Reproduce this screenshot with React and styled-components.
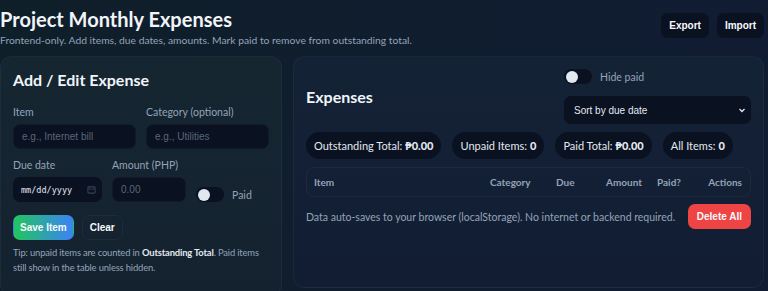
import React from "react";
import styled, { createGlobalStyle } from "styled-components";

const Global = createGlobalStyle`
  * { box-sizing: border-box; }
  html, body { margin: 0; padding: 0; }
  body {
    background: linear-gradient(100deg, #0f1f29 0%, #101d2f 55%, #111c33 100%);
    font-family: Lato, "Noto Sans", sans-serif;
    color: #e5e7eb;
    min-height: 291px;
    overflow: hidden;
  }
`;

const Page = styled.div`
  width: 768px;
  height: 291px;
  padding: 0 4px 0 0;
  display: flex;
  flex-direction: column;
`;

const Header = styled.header`
  display: flex;
  justify-content: space-between;
  align-items: flex-start;
  padding-top: 6px;
`;

const Title = styled.h1`
  margin: 0;
  font-size: 20px;
  line-height: 27px;
  font-weight: 700;
  color: #f1f5f9;
`;

const Subtitle = styled.p`
  margin: 0;
  font-size: 10.3px;
  line-height: 14px;
  color: #94a3b8;
`;

const HeaderButtons = styled.div`
  display: flex;
  gap: 8px;
  padding-top: 7px;
`;

const Btn = styled.button`
  font-family: "Liberation Sans", Arial, sans-serif;
  font-size: 10px;
  font-weight: 700;
  height: 25px;
  padding: 0 ${(p) => p.$px || 6}px;
  border-radius: 7px;
  border: 1px solid ${(p) => (p.$variant === "ghost" ? "#1d2b3a" : "transparent")};
  color: #f8fafc;
  cursor: pointer;
  background: ${(p) =>
    p.$variant === "primary"
      ? "linear-gradient(90deg, #22c55e, #3b82f6)"
      : p.$variant === "danger"
      ? "#ef4444"
      : p.$variant === "ghost"
      ? "transparent"
      : "#0a1120"};
`;

const Main = styled.main`
  display: grid;
  grid-template-columns: 282px minmax(0, 1fr);
  gap: 11px;
  margin-top: 9px;
  flex: 1;
`;

const Card = styled.section`
  border-radius: 12px;
  border: 1px solid rgba(148, 163, 184, 0.07);
  background: ${(p) => p.$bg};
  padding: ${(p) => p.$pad};
  height: ${(p) => p.$h};
`;

const CardTitle = styled.h2`
  margin: 0;
  font-size: 16px;
  line-height: 22px;
  font-weight: 700;
  color: #f1f5f9;
`;

const FormGrid = styled.div`
  display: grid;
  grid-template-columns: 123px 123px;
  gap: 10px;
  margin-top: 14px;
`;

const Field = styled.label`
  display: flex;
  flex-direction: column;
  gap: 5px;
`;

const Label = styled.span`
  font-size: 10.5px;
  line-height: 14px;
  color: #94a3b8;
`;

const Input = styled.input`
  width: ${(p) => p.$w || "100%"};
  height: 25px;
  border-radius: 7px;
  border: 1px solid #121a2a;
  background: #0a1120;
  color: #cbd5e1;
  padding: 0 8px;
  font-family: "Liberation Sans", Arial, sans-serif;
  font-size: 10px;
  outline: none;
  color-scheme: dark;
  &::placeholder { color: #5b6678; }
`;

const Row = styled.div`
  display: flex;
  align-items: flex-end;
  gap: ${(p) => p.$gap || 10}px;
  margin-top: ${(p) => p.$mt || 0}px;
`;

const ToggleWrap = styled.label`
  display: flex;
  align-items: center;
  gap: 8px;
  font-size: 10.5px;
  color: #94a3b8;
`;

const Track = styled.span`
  width: 28px;
  height: 15px;
  border-radius: 8px;
  background: #0a1120;
  display: flex;
  align-items: center;
  padding-left: 2px;
`;

const Knob = styled.span`
  width: 12px;
  height: 12px;
  border-radius: 50%;
  background: #e2e8f0;
`;

const DateText = styled.span`
  font-family: "DejaVu Sans Mono", monospace;
  font-size: 8.5px;
  color: #e2e8f0;
  flex: 1;
`;

const DateBox = styled.div`
  width: 89px;
  height: 25px;
  border-radius: 7px;
  background: #0a1120;
  display: flex;
  align-items: center;
  padding: 0 6px 0 8px;
`;

const Tip = styled.p`
  margin: 5px 0 0;
  font-size: 9.4px;
  letter-spacing: -0.15px;
  line-height: 15px;
  color: #94a3b8;
  b { color: #e2e8f0; font-weight: 700; }
`;

const ExpHeader = styled.div`
  display: flex;
  justify-content: space-between;
  align-items: center;
`;

const RightCol = styled.div`
  display: flex;
  flex-direction: column;
  gap: 12px;
  width: 187px;
`;

const Select = styled.div`
  height: 28px;
  border-radius: 7px;
  background: #0a1120;
  display: flex;
  align-items: center;
  justify-content: space-between;
  padding: 0 4px 0 10px;
  font-family: "Liberation Sans", Arial, sans-serif;
  font-size: 10px;
  color: #e2e8f0;
`;

const Pills = styled.div`
  display: flex;
  gap: 11px;
  margin-top: 8px;
`;

const Pill = styled.div`
  height: 27px;
  padding: 0 8px;
  border-radius: 14px;
  background: #0a1120;
  display: flex;
  align-items: center;
  font-size: 11px;
  color: #e2e8f0;
  white-space: nowrap;
  b { font-weight: 900; margin-left: 3px; }
`;

const Table = styled.div`
  margin-top: 8px;
  height: 30px;
  border-radius: 8px;
  border: 1px solid rgba(148, 163, 184, 0.08);
  display: grid;
  grid-template-columns: 176px 66px 50px 51px 1fr auto;
  align-items: center;
  padding: 0 8px 0 7px;
`;

const Th = styled.span`
  font-size: 10px;
  font-weight: 700;
  color: #94a3b8;
  text-align: ${(p) => p.$align || "left"};
`;

const Footer = styled.div`
  display: flex;
  justify-content: space-between;
  align-items: center;
  margin-top: 7px;
`;

const Note = styled.span`
  font-size: 10.5px;
  color: #94a3b8;
`;

export default function App() {
  return (
    <>
      <Global />
      <Page>
        <Header>
          <div>
            <Title>Project Monthly Expenses</Title>
            <Subtitle>Frontend-only. Add items, due dates, amounts. Mark paid to remove from outstanding total.</Subtitle>
          </div>
          <HeaderButtons>
            <Btn $px={7}>Export</Btn>
            <Btn $px={7}>Import</Btn>
          </HeaderButtons>
        </Header>
        <Main>
          <Card $bg="linear-gradient(180deg, #152631 0%, #14222f 100%)" $pad="12px 8px 12px 12px" $h="240px">
            <CardTitle>Add / Edit Expense</CardTitle>
            <FormGrid>
              <Field>
                <Label>Item</Label>
                <Input placeholder="e.g., Internet bill" />
              </Field>
              <Field>
                <Label>Category (optional)</Label>
                <Input placeholder="e.g., Utilities" />
              </Field>
            </FormGrid>
            <Row $mt={9}>
              <Field>
                <Label>Due date</Label>
                <DateBox>
                  <DateText>mm/dd/yyyy</DateText>
                  <svg width="9" height="9" viewBox="0 0 10 10" fill="none" stroke="#334155" strokeWidth="1.2">
                    <rect x="1" y="2" width="8" height="7" rx="1" />
                    <path d="M3 1v2M7 1v2M1 4.5h8" />
                  </svg>
                </DateBox>
              </Field>
              <Field>
                <Label>Amount (PHP)</Label>
                <Input $w="74px" placeholder="0.00" />
              </Field>
              <ToggleWrap>
                <Track><Knob /></Track>
                Paid
              </ToggleWrap>
            </Row>
            <Row $mt={13} $gap={8}>
              <Btn $variant="primary">Save Item</Btn>
              <Btn $variant="ghost" $px={7}>Clear</Btn>
            </Row>
            <Tip>
              Tip: unpaid items are counted in <b>Outstanding Total</b>. Paid items still show in the table unless hidden.
            </Tip>
          </Card>
          <Card $bg="linear-gradient(180deg, #142236 0%, #121d33 100%)" $pad="12px 12px 12px 12px" $h="232px">
            <ExpHeader>
              <CardTitle>Expenses</CardTitle>
              <RightCol>
                <ToggleWrap>
                  <Track><Knob /></Track>
                  Hide paid
                </ToggleWrap>
                <Select>
                  Sort by due date
                  <svg width="10" height="10" viewBox="0 0 10 10" fill="none" stroke="#e2e8f0" strokeWidth="1.3">
                    <path d="M2.5 4l2.5 2.5L7.5 4" />
                  </svg>
                </Select>
              </RightCol>
            </ExpHeader>
            <Pills>
              <Pill>Outstanding Total: <b>₱0.00</b></Pill>
              <Pill>Unpaid Items: <b>0</b></Pill>
              <Pill>Paid Total: <b>₱0.00</b></Pill>
              <Pill>All Items: <b>0</b></Pill>
            </Pills>
            <Table>
              <Th>Item</Th>
              <Th>Category</Th>
              <Th>Due</Th>
              <Th>Amount</Th>
              <Th>Paid?</Th>
              <Th $align="right">Actions</Th>
            </Table>
            <Footer>
              <Note>Data auto-saves to your browser (localStorage). No internet or backend required.</Note>
              <Btn $variant="danger" $px={8}>Delete All</Btn>
            </Footer>
          </Card>
        </Main>
      </Page>
    </>
  );
}
